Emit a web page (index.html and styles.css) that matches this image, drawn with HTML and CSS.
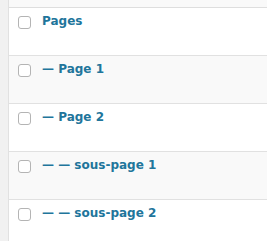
FILE: index.html
```html
<!DOCTYPE html>
<html>
<head>
<meta charset="utf-8">
<link rel="stylesheet" href="styles.css">
</head>
<body>
<div class="page">
  <div class="gutter"></div>
  <div class="list">
    <div class="topbar"></div>
    <div class="row"><input type="checkbox" class="cb"><a class="title">Pages</a></div>
    <div class="row alt"><input type="checkbox" class="cb"><a class="title">— Page 1</a></div>
    <div class="row"><input type="checkbox" class="cb"><a class="title">— Page 2</a></div>
    <div class="row alt"><input type="checkbox" class="cb"><a class="title">— — sous-page 1</a></div>
    <div class="row"><input type="checkbox" class="cb"><a class="title">— — sous-page 2</a></div>
  </div>
</div>
</body>
</html>
```
FILE: styles.css
```css
html, body {
  margin: 0;
  padding: 0;
  background: #ffffff;
}
.page {
  display: flex;
  height: 241px;
  overflow: hidden;
  font-family: "DejaVu Sans", Verdana, sans-serif;
}
.gutter {
  width: 8px;
  background: #f1f1f1;
  border-right: 1px solid #e1e1e1;
  flex: none;
}
.list {
  flex: 1;
  display: flex;
  flex-direction: column;
}
.topbar {
  height: 7px;
  background: #f9f9f9;
  border-bottom: 1px solid #dedede;
  flex: none;
}
.row {
  height: 47px;
  border-bottom: 1px solid #e1e1e1;
  display: flex;
  align-items: flex-start;
  padding-left: 9px;
  flex: none;
  background: #ffffff;
}
.row.alt {
  background: #f9f9f9;
}
.cb {
  appearance: none;
  -webkit-appearance: none;
  width: 11px;
  height: 11px;
  margin: 8px 0 0 0;
  border: 1px solid #b4b4b4;
  border-radius: 3px;
  background: #ffffff;
  box-sizing: content-box;
  flex: none;
}
.title {
  margin-left: 11px;
  margin-top: 4px;
  font-size: 12px;
  line-height: 18px;
  font-weight: bold;
  color: #21759b;
  white-space: nowrap;
}
```
